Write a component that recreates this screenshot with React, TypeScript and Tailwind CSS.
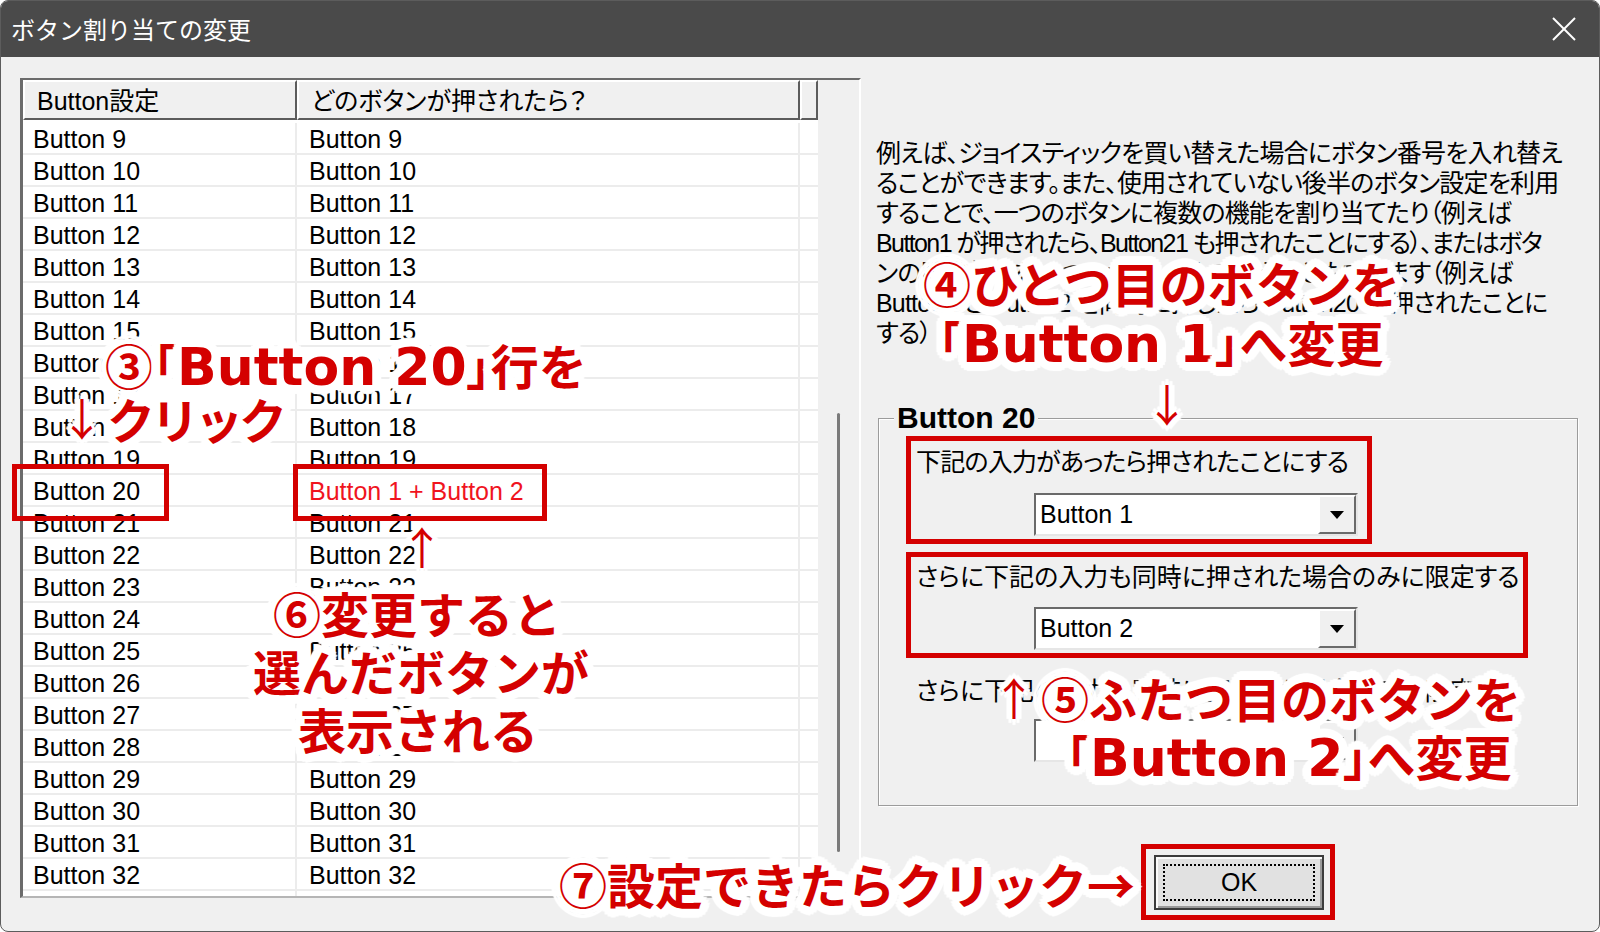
import React from "react";

const rows = Array.from({ length: 24 }, (_, i) => i + 9);

const FONT =
  "font-['Liberation_Sans','Noto_Sans_CJK_JP',sans-serif] [font-feature-settings:'palt']";

const HALO =
  "[text-shadow:9px_0_1px_#fff,8px_3px_1px_#fff,6px_6px_1px_#fff,3px_8px_1px_#fff,0_9px_1px_#fff,-3px_8px_1px_#fff,-6px_6px_1px_#fff,-8px_3px_1px_#fff,-9px_0_1px_#fff,-8px_-3px_1px_#fff,-6px_-6px_1px_#fff,-3px_-8px_1px_#fff,0_-9px_1px_#fff,3px_-8px_1px_#fff,6px_-6px_1px_#fff,8px_-3px_1px_#fff,5px_0_0_#fff,4px_4px_0_#fff,0_5px_0_#fff,-4px_4px_0_#fff,-5px_0_0_#fff,-4px_-4px_0_#fff,0_-5px_0_#fff,4px_-4px_0_#fff,2px_0_0_#fff,-2px_0_0_#fff,0_2px_0_#fff,0_-2px_0_#fff]";

const HALO_S =
  "[text-shadow:6px_0_1px_#fff,4px_4px_1px_#fff,0_6px_1px_#fff,-4px_4px_1px_#fff,-6px_0_1px_#fff,-4px_-4px_1px_#fff,0_-6px_1px_#fff,4px_-4px_1px_#fff,3px_0_0_#fff,-3px_0_0_#fff,0_3px_0_#fff,0_-3px_0_#fff]";

const CALL =
  "absolute whitespace-nowrap leading-none font-bold text-[#d40000] text-[48px] font-['Noto_Sans_CJK_JP',sans-serif] [font-feature-settings:normal] " +
  HALO;

const ARROW =
  "absolute whitespace-nowrap leading-none font-normal text-[#d40000] text-[44px] font-['Noto_Sans_CJK_JP',sans-serif] [font-feature-settings:normal] " +
  HALO_S;

const LAT = "font-['DejaVu_Sans',sans-serif] text-[52px]";
const PALT = "[font-feature-settings:'palt']";

const REDBOX = "absolute border-[5px] border-[#d40000]";

function Combo({ value }: { value: string }) {
  return (
    <div className="flex h-[43px] w-[324px] bg-white border-t-2 border-l-2 border-t-[#6a6a6a] border-l-[#6a6a6a] border-b-2 border-r-2 border-b-[#e6e6e6] border-r-[#e6e6e6]">
      <div className="flex-1 flex items-center pl-[4px] text-[25px] leading-none">
        {value}
      </div>
      <div className="w-[38px] flex items-center justify-center bg-[#f0f0f0] border-t-2 border-l-2 border-t-white border-l-white border-b-2 border-r-2 border-b-[#6a6a6a] border-r-[#6a6a6a]">
        <svg width="14" height="8" viewBox="0 0 14 8">
          <polygon points="0,0 14,0 7,8" fill="#000" />
        </svg>
      </div>
    </div>
  );
}

const DESC = "h-[30px] leading-[30px] whitespace-nowrap tracking-[-0.8px]";

export default function App() {
  return (
    <div className={"relative w-[1600px] h-[932px] bg-white overflow-hidden text-black " + FONT}>
      <div className="w-full h-full flex flex-col rounded-[8px] border border-[#5c5c5c] overflow-hidden bg-[#f0f0f0]">
        {/* Title bar */}
        <div className="h-[56px] shrink-0 bg-[#4a4a4a] flex items-center justify-between pl-[10px] pr-[22px]">
          <span className="text-white text-[24px] leading-none font-['Noto_Sans_CJK_JP',sans-serif] [font-feature-settings:normal]">
            ボタン割り当ての変更
          </span>
          <svg width="26" height="26" viewBox="0 0 26 26">
            <line x1="2" y1="2" x2="24" y2="24" stroke="#fff" strokeWidth="2" />
            <line x1="24" y1="2" x2="2" y2="24" stroke="#fff" strokeWidth="2" />
          </svg>
        </div>

        {/* Body */}
        <div className="flex-1 flex text-[25px]">
          {/* List view */}
          <div className="ml-[19px] mt-[21px] w-[841px] h-[820px] flex border-t-2 border-l-[3px] border-t-[#6b6b6b] border-l-[#6b6b6b] border-b-2 border-r-2 border-b-[#b5b5b5] border-r-white">
            <div className="w-[795px] flex flex-col bg-white">
              {/* header */}
              <div className="h-[40px] flex shrink-0 bg-[#f0f0f0]">
                <div className="w-[274px] flex items-center pl-[12px] pt-[3px] border-t-2 border-l-2 border-t-white border-l-white border-b-2 border-r-2 border-b-[#5c5c5c] border-r-[#5c5c5c] leading-none">
                  Button設定
                </div>
                <div className="w-[503px] flex items-center pl-[12px] pt-[3px] border-t-2 border-l-2 border-t-white border-l-white border-b-2 border-r-2 border-b-[#5c5c5c] border-r-[#5c5c5c] leading-none">
                  どのボタンが押されたら？
                </div>
                <div className="flex-1 border-t-2 border-l-2 border-t-white border-l-white border-b-2 border-r-2 border-b-[#5c5c5c] border-r-[#5c5c5c]" />
              </div>
              {/* rows */}
              <div className="flex-1 pt-[3px] overflow-hidden">
                {rows.map((n) => (
                  <div key={n} className="flex h-[32px] border-b-2 border-[#ececec]">
                    <div className="w-[274px] pl-[10px] pt-[2px] flex items-center border-r-2 border-[#ececec] leading-none">
                      Button {n}
                    </div>
                    <div
                      className={
                        "w-[503px] pl-[12px] pt-[2px] flex items-center border-r-2 border-[#ececec] leading-none " +
                        (n === 20 ? "text-[#f0141e]" : "")
                      }
                    >
                      {n === 20 ? "Button 1 + Button 2" : "Button " + n}
                    </div>
                    <div className="flex-1" />
                  </div>
                ))}
                <div className="flex h-[8px]">
                  <div className="w-[274px] border-r-2 border-[#ececec]" />
                  <div className="w-[503px] border-r-2 border-[#ececec]" />
                </div>
              </div>
            </div>
            {/* scroll track */}
            <div className="flex-1 bg-[#f0f0f0] pt-[333px] pl-[19px]">
              <div className="w-[3px] h-[439px] rounded-full bg-[#7a7a7a]" />
            </div>
          </div>

          {/* Right column */}
          <div className="ml-[15px] w-[705px] flex flex-col">
            <div className="mt-[81px] flex flex-col">
              <div className={DESC}>
                例えば、ジョイスティックを買い替えた場合にボタン番号を入れ替え
              </div>
              <div className={DESC}>
                ることができます。また、使用されていない後半のボタン設定を利用
              </div>
              <div className={DESC}>
                することで、一つのボタンに複数の機能を割り当てたり（例えば
              </div>
              <div className="h-[30px] leading-[30px] whitespace-nowrap tracking-[-1.6px]">
                Button1 が押されたら、Button21 も押されたことにする）、またはボタ
              </div>
              <div className={DESC}>
                ンの同時押しを一つのボタンとして扱うこともできます（例えば
              </div>
              <div className={DESC}>
                Button1 と Button2 を同時に押したら Button20 が押されたことに
              </div>
              <div className={DESC}>する）</div>
            </div>

            {/* Group box */}
            <div className="relative mt-[70px] ml-[2px] w-[700px] h-[388px] border border-[#9c9c9c] shadow-[inset_1px_1px_0_#fff,1px_1px_0_#fff] pl-[37px] pt-[28px] flex flex-col">
              <div className="absolute -top-[18px] left-[15px] px-[3px] bg-[#f0f0f0] text-[30px] leading-[34px] font-bold">
                Button 20
              </div>
              <div className="h-[30px] leading-[30px] whitespace-nowrap tracking-[-0.8px]">
                下記の入力があったら押されたことにする
              </div>
              <div className="mt-[16px] ml-[118px]">
                <Combo value="Button 1" />
              </div>
              <div className="mt-[26px] h-[30px] leading-[30px] whitespace-nowrap">
                さらに下記の入力も同時に押された場合のみに限定する
              </div>
              <div className="mt-[15px] ml-[118px]">
                <Combo value="Button 2" />
              </div>
              <div className="mt-[26px] h-[30px] leading-[30px] whitespace-nowrap">
                さらに下記の入力も同時に押された場合のみに限定する
              </div>
              <div className="mt-[13px] ml-[118px]">
                <Combo value="" />
              </div>
            </div>

            {/* OK button */}
            <div className="mt-[49px] ml-[278px] w-[170px] h-[55px] bg-[#e1e1e1] border-2 border-[#3c3c3c] shadow-[inset_2px_2px_0_#fafafa,inset_-2px_-2px_0_#9a9a9a] p-[7px]">
              <div className="w-full h-full border-2 border-dotted border-black flex items-center justify-center text-[25px] leading-none">
                OK
              </div>
            </div>
          </div>
        </div>
      </div>

      {/* Red annotation boxes */}
      <div className={REDBOX + " left-[12px] top-[464px] w-[157px] h-[57px]"} />
      <div className={REDBOX + " left-[293px] top-[464px] w-[254px] h-[57px]"} />
      <div className={REDBOX + " left-[906px] top-[436px] w-[466px] h-[108px]"} />
      <div className={REDBOX + " left-[906px] top-[552px] w-[622px] h-[106px]"} />
      <div className={REDBOX + " left-[1141px] top-[844px] w-[194px] h-[76px]"} />

      {/* Callouts */}
      <div className={CALL + " left-[105px] top-[340px]"}>
        ③<span className={PALT}>「</span>
        <span className={LAT}>Button 20</span>
        <span className={PALT}>」</span>行を
      </div>
      <div className={ARROW + " left-[60px] top-[395px]"}>↓</div>
      <div className={CALL + " left-[107px] top-[394px] tracking-[-4px]"}>クリック</div>

      <div className={CALL + " left-[923px] top-[258px]"}>④ひとつ目のボタンを</div>
      <div className={CALL + " left-[938px] top-[317px]"}>
        <span className={PALT}>「</span>
        <span className={LAT}>Button 1</span>
        <span className={PALT}>」</span>へ変更
      </div>
      <div className={ARROW + " left-[1145px] top-[381px]"}>↓</div>

      <div className={ARROW + " left-[992px] top-[675px]"}>↑</div>
      <div className={CALL + " left-[1041px] top-[673px]"}>⑤ふたつ目のボタンを</div>
      <div className={CALL + " left-[1066px] top-[731px]"}>
        <span className={PALT}>「</span>
        <span className={LAT}>Button 2</span>
        <span className={PALT}>」</span>へ変更
      </div>

      <div className={ARROW + " left-[400px] top-[524px]"}>↑</div>
      <div className={CALL + " left-[273px] top-[588px]"}>⑥変更すると</div>
      <div className={CALL + " left-[253px] top-[646px]"}>選んだボタンが</div>
      <div className={CALL + " left-[298px] top-[704px]"}>表示される</div>

      <div className={CALL + " left-[559px] top-[859px]"}>⑦設定できたらクリック→</div>
    </div>
  );
}
